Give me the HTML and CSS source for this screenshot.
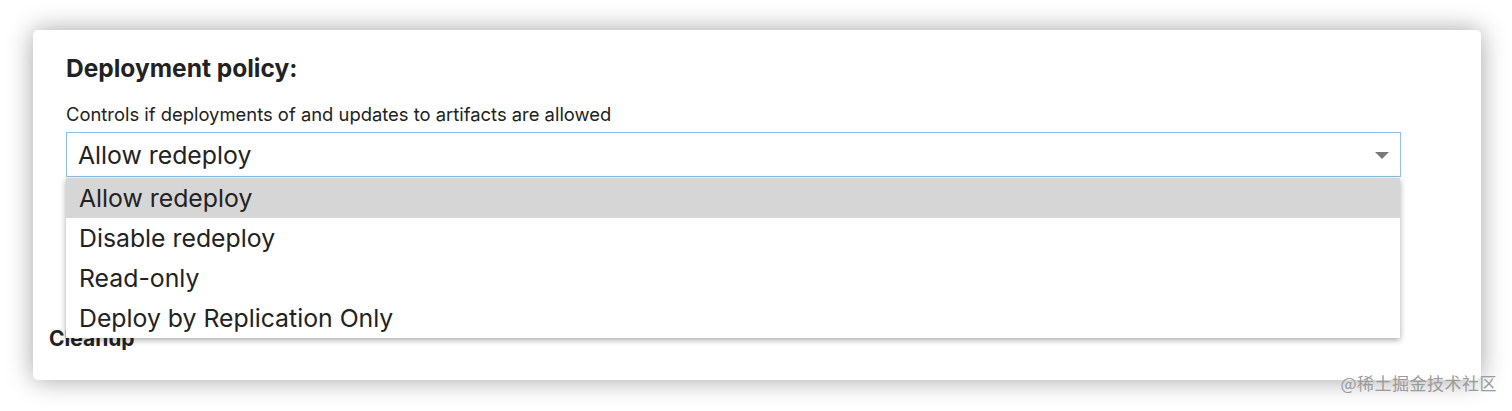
FILE: index.html
```html
<!DOCTYPE html>
<html>
<head>
<meta charset="utf-8">
<link rel="stylesheet" href="styles.css">
</head>
<body>
<div class="page">
  <div class="card">
    <section class="policy">
      <h2 class="title">Deployment policy:</h2>
      <p class="desc">Controls if deployments of and updates to artifacts are allowed</p>
      <div class="select-wrap">
        <div class="select">
          <span class="value">Allow redeploy</span>
          <svg class="arrow" width="14" height="7" viewBox="0 0 14 7"><path d="M0 0 H14 L7 7 Z" fill="#7a7a7a"/></svg>
        </div>
        <ul class="menu">
          <li class="item active">Allow redeploy</li>
          <li class="item">Disable redeploy</li>
          <li class="item">Read-only</li>
          <li class="item">Deploy by Replication Only</li>
        </ul>
      </div>
    </section>
    <h3 class="cleanup">Cleanup</h3>
  </div>
  <div class="watermark">@稀土掘金技术社区</div>
</div>
</body>
</html>
```
FILE: styles.css
```css
html, body {
  margin: 0;
  padding: 0;
  background: #ffffff;
}
body {
  font-family: Inter, "Noto Sans", "Noto Sans CJK SC", sans-serif;
  color: #222;
}
.page {
  position: relative;
  width: 1512px;
  height: 411px;
  padding: 30px 31px 0 33px;
  box-sizing: border-box;
}
.card {
  width: 1448px;
  height: 350px;
  background: #fff;
  border-radius: 5px;
  box-shadow: 0 0 26px rgba(0, 0, 0, 0.36);
  box-sizing: border-box;
  padding-top: 23px;
}
.policy {
  padding: 0 80px 0 33px;
}
.title {
  margin: 0;
  font-size: 24.5px;
  font-weight: 700;
  line-height: 30px;
  color: #222;
}
.desc {
  margin: 20px 0 0;
  font-size: 18.4px;
  line-height: 22px;
  color: #222;
}
.select-wrap {
  position: relative;
  margin-top: 7px;
}
.select {
  display: flex;
  align-items: center;
  justify-content: space-between;
  height: 45px;
  box-sizing: border-box;
  border: 1px solid #8fc0e3;
  padding: 0 11px 0 11px;
  background: #fff;
}
.value {
  font-size: 24.8px;
  line-height: 30px;
  margin-top: 1px;
  color: #222;
}
.arrow {
  display: block;
  margin-top: 2px;
}
.menu {
  position: absolute;
  left: 0;
  right: 1px;
  top: 46px;
  margin: 0;
  padding: 0;
  list-style: none;
  background: #fff;
  box-shadow: 0 2px 6px rgba(0, 0, 0, 0.35);
  z-index: 2;
}
.item {
  height: 40px;
  line-height: 40px;
  padding-left: 13px;
  font-size: 24.8px;
  color: #222;
}
.item.active {
  background: #d6d6d6;
}
.cleanup {
  margin: 150px 0 0 16px;
  font-size: 21px;
  font-weight: 700;
  line-height: 24px;
  color: #222;
}
.watermark {
  position: absolute;
  right: 15px;
  bottom: 16px;
  font-size: 17px;
  color: #9a9a9a;
  font-family: "Noto Sans CJK SC", sans-serif;
  letter-spacing: 0.5px;
}
```
